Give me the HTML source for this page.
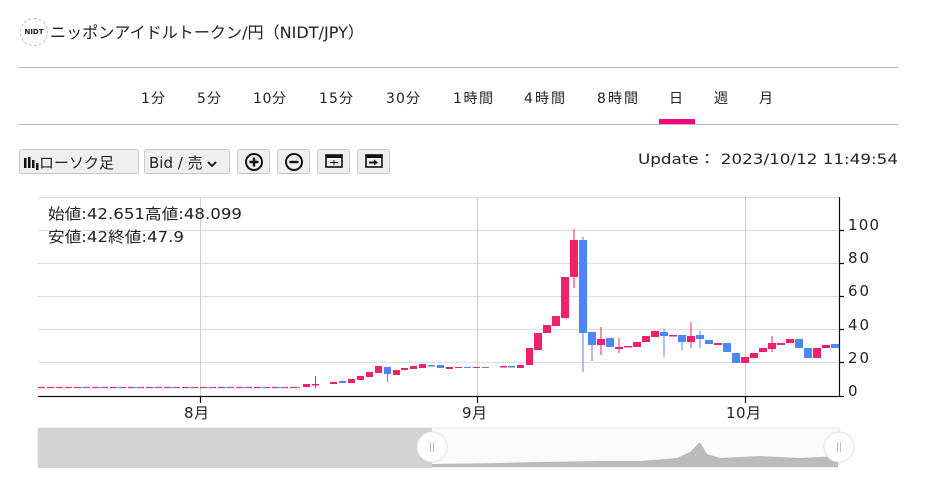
<!DOCTYPE html>
<html><head><meta charset="utf-8"><style>
*{margin:0;padding:0;box-sizing:border-box}
body{width:928px;height:482px;background:#fff;position:relative;overflow:hidden;font-family:"DejaVu Sans","Noto Sans CJK JP",sans-serif;color:#222}
.a{position:absolute;white-space:nowrap}
.hr{position:absolute;left:18px;width:880px;height:1px;background:#bbb}
.tab{position:absolute;top:88px;font-size:14px;color:#222}
.btn{position:absolute;top:149px;height:25px;background:#efefef;border:1px solid #c8c8c8;border-radius:3px}
</style></head><body>
<div class="a" style="left:20px;top:18px;width:28px;height:28px;border:1px dashed #bbb;border-radius:50%;font-size:7px;font-weight:bold;line-height:26px;text-align:center;color:#222">NIDT</div>
<svg class="a" style="left:0;top:0" width="928" height="482" font-family="DejaVu Sans, Noto Sans CJK JP, sans-serif">
<text x="50" y="38" font-size="16" fill="#222" textLength="314" lengthAdjust="spacingAndGlyphs">ニッポンアイドルトークン/円（NIDT/JPY）</text>
<g font-size="14" fill="#222">
<text x="141" y="103" textLength="24">1分</text>
<text x="197" y="103" textLength="24">5分</text>
<text x="253" y="103" textLength="33">10分</text>
<text x="319" y="103" textLength="34">15分</text>
<text x="386" y="103" textLength="34">30分</text>
<text x="453" y="103" textLength="40">1時間</text>
<text x="524" y="103" textLength="41">4時間</text>
<text x="597" y="103" textLength="41">8時間</text>
<text x="669" y="103">日</text><text x="714" y="103">週</text><text x="759" y="103">月</text>
<text x="638" y="164" textLength="260" lengthAdjust="spacingAndGlyphs">Update： 2023/10/12 11:49:54</text>
</g>
</svg>
<div class="a" style="left:659px;top:119px;width:36px;height:5px;background:#f0067f"></div>
<div class="hr" style="top:67px"></div>
<div class="hr" style="top:124px"></div>

<div class="btn" style="left:19px;width:120px"><span class="a" style="left:3px;top:2px;font-size:15px"><svg width="16" height="16" style="vertical-align:-3px"><rect x="1" y="3" width="2.5" height="10" fill="#111"/><rect x="5" y="2" width="2.5" height="11" fill="#111"/><rect x="9" y="5" width="2.5" height="8" fill="#111"/><rect x="13" y="8" width="2.5" height="7" fill="#111"/></svg>ローソク足</span></div>
<div class="btn" style="left:144px;width:86px"><span class="a" style="left:4px;top:2px;font-size:15px">Bid / 売 <svg width="10" height="8"><path d="M1 2l4 4 4-4" stroke="#111" stroke-width="1.8" fill="none"/></svg></span></div>
<div class="btn" style="left:237px;width:33px"><svg class="a" style="left:6px;top:2px" width="20" height="20"><circle cx="10" cy="10" r="8" fill="none" stroke="#111" stroke-width="2"/><path d="M10 5.5v9M5.5 10h9" stroke="#111" stroke-width="2.4"/></svg></div>
<div class="btn" style="left:277px;width:33px"><svg class="a" style="left:6px;top:2px" width="20" height="20"><circle cx="10" cy="10" r="8" fill="none" stroke="#111" stroke-width="2"/><path d="M5.5 10h9" stroke="#111" stroke-width="2.4"/></svg></div>
<div class="btn" style="left:317px;width:33px"><svg class="a" style="left:7px;top:4px" width="18" height="15"><rect x="1" y="1" width="16" height="12" fill="none" stroke="#111" stroke-width="1.6"/><rect x="1" y="1" width="16" height="3" fill="#111"/><path d="M5 8.5h8M9 6v5" stroke="#111" stroke-width="1"/></svg></div>
<div class="btn" style="left:357px;width:33px"><svg class="a" style="left:7px;top:4px" width="18" height="15"><rect x="1" y="1" width="16" height="12" fill="none" stroke="#111" stroke-width="1.6"/><rect x="1" y="1" width="16" height="3" fill="#111"/><path d="M4 8.5h6" stroke="#111" stroke-width="2"/><path d="M9 5.5l4 3-4 3z" fill="#111"/></svg></div>

<svg class="a" style="left:0;top:0" width="928" height="482">
<g stroke="#ddd" stroke-width="1">
<path d="M38 197.5H839M38 230.5H839M38 263.5H839M38 296.5H839M38 329.5H839M38 362.5H839"/>
<path d="M200.5 197V396M477.5 197V396M745.5 197V396" stroke="#ccc"/>
</g>
<path d="M38 396.5H840M839.5 197V397M839 230.5h5M839 263.5h5M839 296.5h5M839 329.5h5M839 362.5h5M839 396.5h5M200.5 396v7M477.5 396v7M745.5 396v7" stroke="#111" stroke-width="1.2" fill="none"/>
<g font-size="15" fill="#222" font-family="DejaVu Sans, Noto Sans CJK JP, sans-serif">
<text x="848" y="230" textLength="31">100</text><text x="848" y="263" textLength="21">80</text><text x="848" y="296" textLength="21">60</text><text x="848" y="330" textLength="21">40</text><text x="848" y="363" textLength="21">20</text><text x="848" y="396">0</text>
<text x="184" y="418" textLength="25">8月</text><text x="462" y="418" textLength="25">9月</text><text x="726" y="418" textLength="35">10月</text>
<text x="48" y="219" textLength="194" lengthAdjust="spacingAndGlyphs">始値:42.651高値:48.099</text>
<text x="48" y="242" textLength="136" lengthAdjust="spacingAndGlyphs">安値:42終値:47.9</text>
</g>
<path d="M38 387.5H300" stroke="#e8306a" stroke-width="1.3" stroke-dasharray="7 2"/>
<path d="M80 387.5H300" stroke="#5b8ef5" stroke-width="1.3" stroke-dasharray="7 11" opacity=".8"/>
<g fill="#f0206a">
<rect x="303" y="384" width="7" height="3"/><rect x="312" y="384" width="7" height="1.5"/><rect x="315" y="376" width="1" height="12"/>
<rect x="330" y="382" width="7" height="2"/><rect x="348" y="379" width="7" height="4"/><rect x="357" y="376" width="7" height="4"/>
<rect x="366" y="372" width="7" height="5"/><rect x="375" y="366" width="7" height="7"/><rect x="393" y="370" width="7" height="5"/>
<rect x="401" y="368" width="7" height="2"/><rect x="410" y="366" width="7" height="3"/><rect x="419" y="364" width="7" height="4"/>
<rect x="446" y="367" width="7" height="2"/><rect x="455" y="367" width="7" height="1"/><rect x="473" y="367" width="7" height="1"/>
<rect x="500" y="366" width="7" height="1.5"/><rect x="517" y="365" width="7" height="3"/>
<rect x="526" y="348" width="7" height="17"/><rect x="534" y="333" width="8" height="17"/><rect x="543" y="325" width="8" height="8"/>
<rect x="552" y="316" width="8" height="10"/><rect x="561" y="277" width="8" height="41"/><rect x="570" y="240" width="8" height="37"/><rect x="573.5" y="229" width="1" height="59"/>
<rect x="597" y="339" width="8" height="6"/><rect x="600.5" y="327" width="1" height="28"/>
<rect x="615" y="347" width="8" height="2"/><rect x="618.5" y="338" width="1" height="15"/><rect x="624" y="346" width="8" height="1.5"/>
<rect x="633" y="342" width="8" height="5"/><rect x="642" y="336" width="8" height="6"/><rect x="651" y="331" width="8" height="6"/>
<rect x="669" y="335" width="8" height="1.5"/><rect x="687" y="336" width="8" height="6"/><rect x="690.5" y="322" width="1" height="26"/>
<rect x="714" y="343" width="8" height="2"/><rect x="741" y="357" width="8" height="6"/><rect x="750" y="353" width="8" height="5"/>
<rect x="759" y="348" width="8" height="4"/><rect x="768" y="343" width="8" height="6"/><rect x="771.5" y="336" width="1" height="16"/>
<rect x="777" y="343" width="8" height="2"/><rect x="786" y="339" width="8" height="4"/><rect x="813" y="348" width="8" height="10"/><rect x="822" y="345" width="8" height="3"/>
</g>
<g fill="#4d86f7">
<rect x="339" y="381" width="7" height="2"/><rect x="384" y="367" width="7" height="7"/><rect x="387" y="367" width="1" height="15"/>
<rect x="428" y="365" width="7" height="1.5"/><rect x="437" y="365" width="7" height="3"/><rect x="464" y="367" width="7" height="1"/><rect x="482" y="367" width="7" height="1"/><rect x="508" y="366" width="7" height="1.5"/>
<rect x="579" y="240" width="8" height="93"/><rect x="582.5" y="237" width="1" height="135"/>
<rect x="588" y="332" width="8" height="13"/><rect x="591.5" y="332" width="1" height="29"/>
<rect x="606" y="338" width="8" height="9"/><rect x="660" y="332" width="8" height="4"/><rect x="663.5" y="329" width="1" height="28"/>
<rect x="678" y="335" width="8" height="7"/><rect x="681.5" y="335" width="1" height="15"/>
<rect x="696" y="335" width="8" height="4"/><rect x="699.5" y="331" width="1" height="17"/>
<rect x="705" y="340" width="8" height="4"/><rect x="723" y="343" width="8" height="9"/><rect x="732" y="353" width="8" height="10"/>
<rect x="795" y="339" width="8" height="9"/><rect x="804" y="348" width="8" height="10"/><rect x="831" y="344" width="8" height="4"/>
</g>
<rect x="38" y="428" width="801" height="39" fill="#fafafa" stroke="#e6e6e6"/>
<path d="M432 467V464L500 463L540 462L600 461L640 461L677 458L690 452L700 442L707 454L720 458L760 456L800 458L838 456V467Z" fill="#bbb"/>
<rect x="38" y="428" width="394" height="40" fill="#d3d3d3"/>
<g>
<circle cx="432" cy="447" r="15" fill="#fff" stroke="#e2e2e2"/>
<path d="M430.5 442v10M433.5 442v10" stroke="#bbb"/>
<circle cx="839" cy="447" r="15" fill="#fff" stroke="#e2e2e2"/>
<path d="M837.5 442v10M840.5 442v10" stroke="#bbb"/>
</g>
</svg>
</body></html>
